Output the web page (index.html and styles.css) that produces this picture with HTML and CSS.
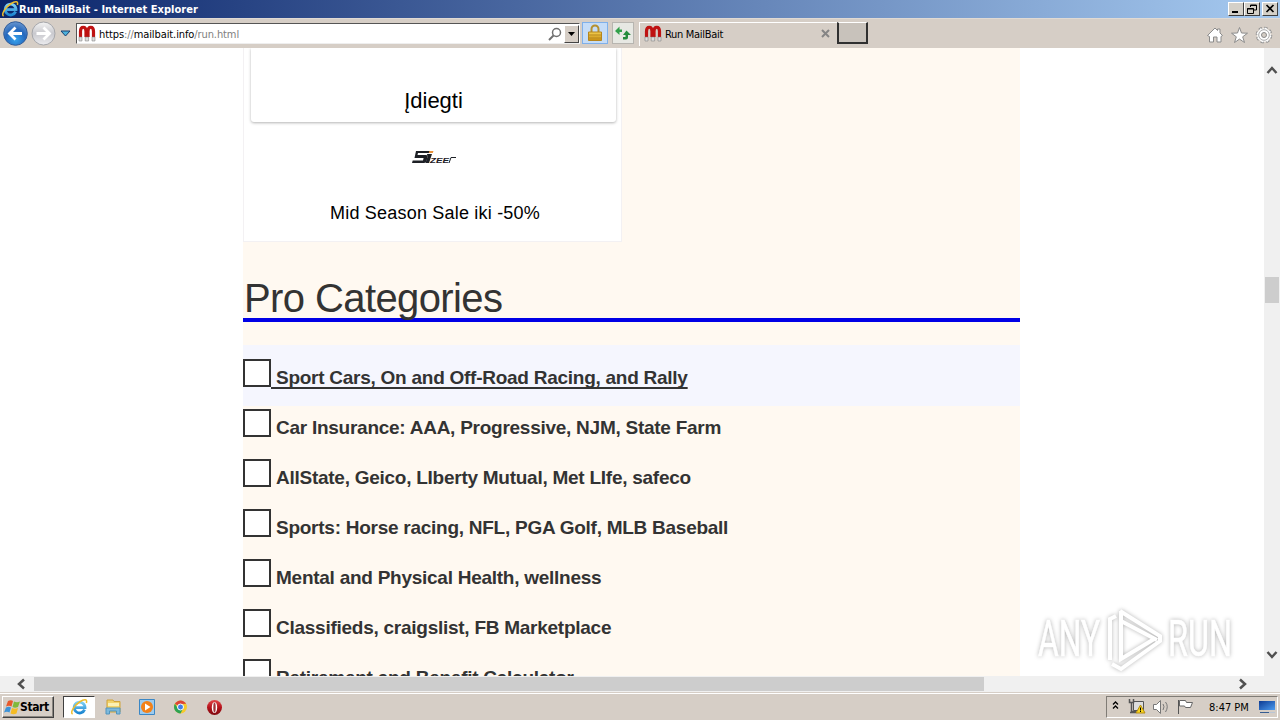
FILE: index.html
```html
<!DOCTYPE html>
<html lang="en">
<head>
<meta charset="UTF-8">
<title>Run MailBait</title>
<link rel="stylesheet" href="styles.css">
</head>
<body>
  <!-- shared icons -->
  <svg class="defs" width="0" height="0">
    <linearGradient id="ieblue" x1="0" y1="0" x2="0" y2="1">
      <stop offset="0" stop-color="#7fd0f5"/>
      <stop offset="1" stop-color="#1c86d1"/>
    </linearGradient>
    <radialGradient id="backblue" cx="50%" cy="75%" r="70%">
      <stop offset="0" stop-color="#38a4ee"/>
      <stop offset="0.6" stop-color="#2568bd"/>
      <stop offset="1" stop-color="#5f8fcc"/>
    </radialGradient>
    <linearGradient id="fwdgrey" x1="0" y1="0" x2="0" y2="1">
      <stop offset="0" stop-color="#f4f4f4"/>
      <stop offset="0.5" stop-color="#c9c9ce"/>
      <stop offset="1" stop-color="#ececef"/>
    </linearGradient>
    <linearGradient id="gold" x1="0" y1="0" x2="0" y2="1">
      <stop offset="0" stop-color="#f3cf52"/>
      <stop offset="1" stop-color="#c78d10"/>
    </linearGradient>
    <linearGradient id="operared" x1="0" y1="0" x2="0" y2="1">
      <stop offset="0" stop-color="#e2474a"/>
      <stop offset="0.5" stop-color="#b5121b"/>
      <stop offset="1" stop-color="#7e0a10"/>
    </linearGradient>
    <linearGradient id="screen" x1="0" y1="0" x2="1" y2="1">
      <stop offset="0" stop-color="#0d3a92"/>
      <stop offset="1" stop-color="#4d9cf0"/>
    </linearGradient>
    <symbol id="ie" viewBox="0 0 18 18">
      <path d="M14.6 11.6A5.4 5.4 0 1 1 15 9.6H5.5" fill="none" stroke="url(#ieblue)" stroke-width="2.8"/>
      <path d="M2.6 16.2C-.2 14.6 4 7.6 9.5 4 14 1 17.6.6 16.4 5" fill="none" stroke="#efbd2c" stroke-width="1.5"/>
    </symbol>
    <symbol id="magnet" viewBox="0 0 18 17">
      <path d="M2.5 12V6.5C2.5 .8 8 .8 8 6.5V12" fill="none" stroke="#bf1212" stroke-width="3.2"/>
      <path d="M10 12V6.5C10 .8 15.5 .8 15.5 6.5V12" fill="none" stroke="#bf1212" stroke-width="3.2"/>
      <path d="M1 12h3v4H1zM7.2 12h3.4v4H7.2zM14 12h3v4h-3z" fill="#dcdcdc" stroke="#777" stroke-width=".5"/>
    </symbol>
  </svg>

  <div class="titlebar">
    <svg width="18" height="18"><use href="#ie"/></svg>
    <span class="caption">Run MailBait - Internet Explorer</span>
    <div class="winbtns">
      <span class="winbtn"><svg width="14" height="12"><path d="M3 8h6v2H3z"/></svg></span>
      <span class="winbtn"><svg width="14" height="12"><path d="M5.5 4V2h6v5H9M5 2.500h7M2.500 5.500h6v5h-6zM2 6h7" fill="none" stroke="#000"/></svg></span>
      <span class="winbtn close"><svg width="14" height="12"><path d="M3.500 2l7 7M10.500 2l-7 7" stroke="#000" stroke-width="1.700"/></svg></span>
    </div>
  </div>

  <div class="toolbar">
    <svg class="nav" width="74" height="30">
      <circle cx="15.5" cy="15.5" r="11.8" fill="url(#backblue)" stroke="#315d9b"/>
      <path d="M22 15.5H10M15.5 9.5l-6 6 6 6" fill="none" stroke="#fff" stroke-width="2.8"/>
      <circle cx="43.5" cy="15.5" r="11.5" fill="url(#fwdgrey)" stroke="#a5a6aa"/>
      <path d="M36.5 15.5H49M43.5 9.5l6 6-6 6" fill="none" stroke="#fff" stroke-width="2.8"/>
      <path d="M61 13h9l-4.5 5z" fill="#4cb2dc" stroke="#183f70"/>
    </svg>
    <div class="address">
      <svg width="18" height="17"><use href="#magnet"/></svg>
      <span class="url">https<i>://</i>mailbait.info<i>/run.html</i></span>
      <svg class="search" width="14" height="14"><circle cx="8.5" cy="5.5" r="4" fill="none" stroke="#707070" stroke-width="1.5"/><path d="M5.5 8.5L1 13" stroke="#707070" stroke-width="2"/></svg>
      <span class="drop"><svg width="9" height="6"><path d="M1 1h7L4.5 5z"/></svg></span>
    </div>
    <div class="lock">
      <svg width="16" height="18"><path d="M4.5 8V5a3.5 3.5 0 0 1 7 0v3" fill="none" stroke="#b5902f" stroke-width="2"/><path d="M1.5 8h13v8.5h-13z" fill="url(#gold)" stroke="#b5851c"/><path d="M2 11h12M2 14h12" stroke="#b98a20"/></svg>
    </div>
    <div class="refresh">
      <svg width="16" height="16"><path d="M0 6l4.500-4v2.500H7M15.500 9.500L11 5.500 8 9.500" fill="none"/><path d="M0 6l4.500-4.500V4.500H7V7H4.500v3z" fill="#31a04a"/><path d="M16 10l-4.500-4.500L8 10h2.500v2H8v2.500h3q2 0 2-2V10z" fill="#258c3d"/></svg>
    </div>
    <div class="tab">
      <svg width="18" height="17"><use href="#magnet"/></svg>
      <span>Run MailBait</span>
      <svg class="tabclose" width="9" height="9"><path d="M1 1l7 7M8 1L1 8" stroke="#858585" stroke-width="2"/></svg>
    </div>
    <div class="newtab"></div>
    <svg class="tools" width="68" height="18" fill="#fff" stroke="#8b8b8b">
      <path d="M1.5 9.5L9 2l2.500 2.500V3H14v4l2.500 2.500-1.500 1V16h-4v-5H7.500v5H3.500v-5.500z"/>
      <path d="M33.500 1.500l2 5.500 6 .2-4.800 3.600 1.800 5.700-5-3.400-5 3.400 1.800-5.700-4.800-3.600 6-.2z"/>
      <circle cx="58" cy="9" r="6.600" stroke-width="3.400" stroke-dasharray="3 2.184"/>
      <circle cx="58" cy="9" r="6.600" stroke="#fff" stroke-width="1.800" stroke-dasharray="2 3.184" stroke-dashoffset="-.5"/>
      <circle cx="58" cy="9" r="5.300" stroke="#aaa"/>
      <circle cx="58" cy="9" r="2.500" fill="#d4cdc5"/>
    </svg>
  </div>

  <div class="view">
    <div class="page">
      <div class="ad">
        <div class="adcard"><p>Įdiegti</p></div>
        <div class="sizeer">
          <svg width="46" height="14">
            <path d="M5 0h14l-.6 2H7l-.5 2H15q2 0 1.500 2l-1 4q-.5 2-2.500 2H1l.7-2.500H12l.6-2.500H3.500z" fill="#1d2025"/>
            <path d="M16 3h5l-3 9h-3.500l2-6z" fill="#1d2025"/>
            <path d="M18.500 0h4l-.7 2h-4z" fill="#e9913a"/>
            <text x="19" y="12" textLength="19" lengthAdjust="spacingAndGlyphs">ZEE</text>
            <path d="M38 12l2-5.500h5" fill="none" stroke="#1d2025"/>
          </svg>
        </div>
        <p class="adtext">Mid Season Sale iki -50%</p>
      </div>

      <h1>Pro Categories</h1>
      <ul class="cats">
        <li class="active"><b class="box"></b><span>&nbsp;Sport Cars, On and Off-Road Racing, and Rally</span></li>
        <li><b class="box"></b><span>&nbsp;Car Insurance: AAA, Progressive, NJM, State Farm</span></li>
        <li><b class="box"></b><span>&nbsp;AllState, Geico, LIberty Mutual, Met LIfe, safeco</span></li>
        <li><b class="box"></b><span>&nbsp;Sports: Horse racing, NFL, PGA Golf, MLB Baseball</span></li>
        <li><b class="box"></b><span>&nbsp;Mental and Physical Health, wellness</span></li>
        <li><b class="box"></b><span>&nbsp;Classifieds, craigslist, FB Marketplace</span></li>
        <li><b class="box"></b><span>&nbsp;Retirement and Benefit Calculator</span></li>
      </ul>
    </div>
    <div class="vscroll">
      <svg width="16" height="628" fill="none" stroke="#505050" stroke-width="2.5">
        <path d="M3.5 25l4.500-5 4.500 5M3.500 604l4.500 5 4.500-5"/>
      </svg>
      <div class="vthumb"></div>
    </div>
  </div>

  <div class="hscroll">
    <svg width="34" height="16"><path d="M24 3.500L19 8l5 4.500" fill="none" stroke="#505050" stroke-width="2.500"/></svg>
    <div class="hthumb"></div>
    <svg class="right" width="16" height="16"><path d="M6 3.500L11 8l-5 4.500" fill="none" stroke="#505050" stroke-width="2.500"/></svg>
  </div>

  <div class="taskbar">
    <div class="start">
      <svg width="16" height="16">
        <path d="M4 2q3-1.500 5 0L7.500 7.500Q5 6 2 7.500z" fill="#e8592b"/>
        <path d="M10 2.500q3 1.500 6 0L14 8q-3 1.500-5.500 0z" fill="#80b93b"/>
        <path d="M2 8.500q3-1.500 5 0L5.500 13.500Q3 12 0 13.500z" fill="#3d93d8"/>
        <path d="M8 9q3 1.500 6 0l-1.500 5.500q-3 1.500-6 0z" fill="#f5bc24"/>
      </svg>
      <span>Start</span>
    </div>
    <div class="task"><svg width="18" height="18"><use href="#ie"/></svg></div>
    <svg class="quick" width="120" height="20">
      <path d="M3 3h6l1 1.500h6V15H3z" fill="#f2d36b" stroke="#cfa33b"/>
      <path d="M4 6h11v3H4z" fill="#faf0b4"/>
      <path d="M2 17v-6h14v6h-3.500v-3h-7v3z" fill="#7db9dc" stroke="#5194be"/>
      <path d="M35.500 2.500h15v15h-15z" fill="#9dcbee" stroke="#3b87c5"/>
      <circle cx="43" cy="10" r="6" fill="#f38118"/>
      <path d="M41 6.500v7l5.500-3.500z" fill="#fff"/>
      <g transform="translate(76.500 10)">
        <circle r="6.500" fill="#f6ca2c"/>
        <path d="M0 0L-5.600-3.250A6.500 6.500 0 0 1 5.600-3.250L0-3z" fill="#dc4437"/>
        <path d="M0 0L-2.600 1.500-5.600-3.250A6.500 6.500 0 0 0 0 6.500L2.600 1.500z" fill="#2da254"/>
        <circle r="3" fill="#3f7fe8" stroke="#fff"/>
      </g>
      <circle cx="110.500" cy="10.500" r="7.500" fill="url(#operared)"/>
      <ellipse cx="110.500" cy="10.500" rx="2.700" ry="5.500" fill="#fff"/>
      <ellipse cx="110.500" cy="10.500" rx="1.200" ry="5" fill="#a1343a"/>
    </svg>
    <div class="tray">
      <svg width="92" height="20" fill="none" stroke="#000">
        <path d="M6 7.500l2.500-2.500L11 7.500M6 11.500L8.500 9l2.500 2.500" stroke-width="1.300"/>
        <path d="M26.500 4.500h10v9h-10z" fill="#ddd" stroke="#555"/>
        <path d="M22.500 2v3.500h4V2M24.500 6v8.500h5M23 15.500h6" stroke="#555" stroke-width="1.500"/>
        <path d="M33.500 8l4.500 8h-9z" fill="#f8d51d" stroke="#b58b12"/><path d="M33.500 10.500v3M33.500 14v1"/>
        <path d="M46.500 7.500h3l4-4v13l-4-4h-3z" fill="#fff" stroke="#777"/>
        <path d="M56 7q2 2.500 0 6M58.500 5q3.500 4.500 0 10" stroke="#777"/>
        <path d="M71.500 3v14" stroke="#555"/>
        <path d="M72.500 3.500h6l1 2h6l-2 5h-5l-1-1.500h-5z" fill="#fff" stroke="#666"/>
      </svg>
      <span>8:47 PM</span>
      <svg class="desk" width="16" height="14"><path d="M0 1h16v9H0z" fill="url(#screen)"/><path d="M1 12.500h9" stroke="#365c91"/><path d="M10 12.500h6" stroke="#b9c5d5"/></svg>
    </div>
  </div>

  <svg class="watermark" width="220" height="76">
    <g class="mark">
      <text x="8" y="52" textLength="62" lengthAdjust="spacingAndGlyphs">ANY</text>
      <path d="M80 56V15l6-3M90 7l40 25v5L91 65l-9-5M91 7v48l34-20.500M91 17l36 19"/>
      <text x="138" y="52" textLength="64" lengthAdjust="spacingAndGlyphs">RUN</text>
    </g>
  </svg>
</body>
</html>
```

FILE: styles.css
```css
* {
  box-sizing: border-box;
}

body {
  margin: 0;
  width: 1280px;
  height: 720px;
  overflow: hidden;
  display: flex;
  flex-direction: column;
  background: #fff;
  font-family: "DejaVu Sans Condensed", "DejaVu Sans", sans-serif;
  font-size: 11px;
  color: #000;
}

svg {
  display: block;
  flex: none;
}

p, h1, ul {
  margin: 0;
}

.defs {
  position: absolute;
}

/* window frame */
.titlebar {
  height: 18px;
  flex: none;
  display: flex;
  align-items: center;
  padding: 0 2px 0 1px;
  background: linear-gradient(to right, #0a246a, #a6caf0);
}

.caption {
  color: #fff;
  font-weight: bold;
  letter-spacing: 0.04px;
  white-space: nowrap;
}

.winbtns {
  margin-left: auto;
  display: flex;
}

.winbtn {
  width: 16px;
  height: 14px;
  background: #d4d0c8;
  border: 1px solid;
  border-color: #fff #404040 #404040 #fff;
}

.close {
  margin-left: 2px;
}

.toolbar {
  height: 30px;
  flex: none;
  display: flex;
  background: #d6cec6;
  border-top: 1px solid #e0dad4;
}

.nav {
  margin-top: -1px;
}

.address {
  width: 504px;
  height: 21px;
  margin: 4px 0 0 2px;
  display: flex;
  align-items: center;
  background: #fff;
  border: 1px solid;
  border-color: #555 #fff #eee #555;
  padding-left: 1px;
}

.url {
  margin-left: 3px;
  padding-top: 1px;
  letter-spacing: -0.1px;
}

.url i {
  font-style: normal;
  color: #808080;
}

.search {
  margin-left: auto;
}

.drop {
  width: 15px;
  height: 18px;
  margin-left: 2px;
  display: flex;
  align-items: center;
  justify-content: center;
  background: #d6cec6;
  border: 1px solid;
  border-color: #fff #444 #444 #fff;
}

.lock {
  width: 26px;
  height: 22px;
  margin: 3px 0 0 2px;
  padding: 1px 4px;
  background: #c5dcf7;
  border: 1px solid #7fb0ea;
}

.refresh {
  width: 22px;
  height: 22px;
  margin: 3px 0 0 4px;
  padding: 2px;
  background: #e7e8e3;
  border: 1px solid #b7b5b0;
}

.tab {
  width: 198px;
  height: 24px;
  margin: 3px 0 0 5px;
  padding: 0 7px 2px 4px;
  display: flex;
  align-items: center;
  border-top: 1px solid #fff;
  border-left: 1px solid #fff;
}

.tab span {
  margin-left: 3px;
  padding-top: 1px;
  letter-spacing: -0.3px;
}

.tabclose {
  margin-left: auto;
}

.newtab {
  width: 31px;
  height: 22px;
  margin-top: 3px;
  background: #c8c2bb;
  border: 1px solid #303030;
  border-width: 1px 2px 2px 2px;
  border-top-color: #fff;
}

.tools {
  margin: 7px 6px 0 auto;
}

/* web page */
.view {
  height: 628px;
  flex: none;
  display: flex;
  overflow: hidden;
}

.page {
  width: 777px;
  margin-left: 243px;
  background: #fff9f1;
  font-family: "Liberation Sans", Arial, sans-serif;
}

.ad {
  width: 379px;
  height: 194px;
  padding: 0 5px 0 7px;
  background: #fff;
  border: 1px solid #f3f1f3;
  border-top: 0;
  text-align: center;
}

.adcard {
  height: 74px;
  padding-top: 40px;
  border-radius: 0 0 3px 3px;
  box-shadow: 0 1px 3px rgba(0, 0, 0, 0.3);
  font-size: 22px;
  line-height: 26px;
}

.sizeer {
  height: 66px;
  padding: 29px 0 0 1px;
  display: flex;
  justify-content: center;
}

.sizeer text {
  font-size: 8px;
  font-style: italic;
  font-weight: bold;
  fill: #1d2025;
}

.adtext {
  margin-top: 14px;
  font-size: 18px;
  line-height: 22px;
  letter-spacing: 0.2px;
  padding-left: 3px;
}

h1 {
  height: 80px;
  padding: 33px 0 0 1px;
  font-size: 40px;
  font-weight: normal;
  line-height: 46px;
  letter-spacing: -0.6px;
  color: #333;
  border-bottom: 4px solid #0000e6;
}

.cats {
  margin-top: 23px;
  padding: 0;
  list-style: none;
}

.cats li {
  height: 50px;
  padding-top: 3px;
  display: flex;
  font-size: 19px;
  font-weight: bold;
  line-height: 22px;
  letter-spacing: -0.26px;
  color: #333;
}

.cats li.active {
  height: 61px;
  padding-top: 14px;
  background: #f5f6fe;
}

.cats span {
  padding-top: 8px;
  white-space: nowrap;
}

.active span {
  text-decoration: underline;
  text-decoration-thickness: 2px;
  text-underline-offset: 3px;
  text-decoration-skip-ink: none;
}

.box {
  width: 28px;
  height: 28px;
  background: #fff;
  border: 2px solid #333;
}

.vscroll {
  position: relative;
  width: 16px;
  margin-left: auto;
  background: #f0f0f0;
}

.vthumb {
  position: absolute;
  top: 229px;
  left: 1px;
  width: 14px;
  height: 26px;
  background: #cdcdcd;
}

.hscroll {
  height: 16px;
  flex: none;
  display: flex;
  align-items: center;
  background: #f0f0f0;
}

.hthumb {
  width: 950px;
  height: 14px;
  background: #cdcdcd;
}

.right {
  margin-left: 250px;
}

/* taskbar */
.taskbar {
  height: 28px;
  flex: none;
  display: flex;
  align-items: flex-start;
  background: #d6cec6;
  border-top: 1px solid #d6cec6;
  box-shadow: inset 0 1px #fff;
}

.start {
  width: 52px;
  height: 22px;
  margin: 3px 0 0 2px;
  padding-left: 1px;
  display: flex;
  align-items: center;
  border: 1px solid;
  border-color: #fff #404040 #404040 #fff;
  box-shadow: inset -1px -1px #8a8680;
  font-size: 12px;
  font-weight: bold;
  letter-spacing: -0.4px;
}

.task {
  width: 32px;
  height: 22px;
  margin: 3px 0 0 9px;
  padding: 1px 6px;
  background: #fff;
  border: 1px solid;
  border-color: #404040 #fff #fff #404040;
}

.quick {
  margin: 4px 0 0 9px;
}

.tray {
  width: 172px;
  height: 22px;
  margin: 3px 2px 0 auto;
  display: flex;
  align-items: center;
  border: 1px solid;
  border-color: #807c76 #fff #fff #807c76;
}

.tray span {
  margin-left: 10px;
  white-space: nowrap;
}

.desk {
  margin: 0 2px 0 auto;
}

/* overlay logo */
.watermark {
  position: absolute;
  left: 1030px;
  top: 604px;
}

.mark {
  fill: #fff;
  filter: drop-shadow(0 0 2px rgba(0, 0, 0, 0.3));
}

.mark text {
  font-family: Roboto, sans-serif;
  font-size: 50px;
  stroke: #fff;
  stroke-width: 0.6px;
}

.mark path {
  fill: none;
  stroke: #fff;
  stroke-width: 4;
}
```
